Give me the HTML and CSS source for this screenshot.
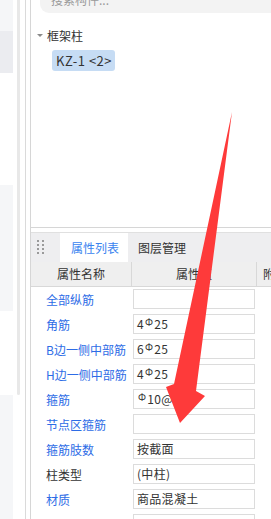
FILE: index.html
```html
<!DOCTYPE html>
<html lang="zh-CN">
<head>
    <meta charset="UTF-8">
    <title>属性列表</title>
    <link rel="stylesheet" href="styles.css">
</head>
<body>
    <div class="app">
        <div class="nav">
            <div class="nav-block soft h31"></div>
            <div class="nav-block dark h42"></div>
            <div class="nav-block h112"></div>
            <div class="nav-block soft h126"></div>
            <div class="nav-block h84"></div>
            <div class="nav-block soft grow"></div>
        </div>
        <div class="rail">
            <div class="thumb"></div>
        </div>
        <div class="main">
            <section class="tree-panel">
                <div class="search">搜索构件...</div>
                <div class="tree-group">
                    <span class="caret"></span>
                    <span>框架柱</span>
                </div>
                <div class="tree-item">KZ-1 &lt;2&gt;</div>
            </section>

            <section class="prop-panel">
                <div class="tabs">
                    <div class="grip">
                        <i></i><i></i><i></i><i></i><i></i><i></i><i></i><i></i>
                    </div>
                    <div class="tab active">属性列表</div>
                    <div class="tab">图层管理</div>
                </div>
                <div class="thead">
                    <div class="th name">属性名称</div>
                    <div class="th value">属性值</div>
                    <div class="th extra">附加</div>
                </div>
                <div class="row">
                    <div class="label">全部纵筋</div>
                    <div class="input"></div>
                </div>
                <div class="row">
                    <div class="label">角筋</div>
                    <div class="input">4<span class="steel">Φ</span>25</div>
                </div>
                <div class="row">
                    <div class="label">B边一侧中部筋</div>
                    <div class="input">6<span class="steel">Φ</span>25</div>
                </div>
                <div class="row">
                    <div class="label">H边一侧中部筋</div>
                    <div class="input">4<span class="steel">Φ</span>25</div>
                </div>
                <div class="row">
                    <div class="label">箍筋</div>
                    <div class="input"><span class="steel">Φ</span>10@100</div>
                </div>
                <div class="row">
                    <div class="label">节点区箍筋</div>
                    <div class="input"></div>
                </div>
                <div class="row">
                    <div class="label">箍筋肢数</div>
                    <div class="input">按截面</div>
                </div>
                <div class="row">
                    <div class="label plain">柱类型</div>
                    <div class="input">(中柱)</div>
                </div>
                <div class="row">
                    <div class="label">材质</div>
                    <div class="input">商品混凝土</div>
                </div>
                <div class="row">
                    <div class="label"></div>
                    <div class="input"></div>
                </div>
            </section>
        </div>
    </div>

    <svg class="arrow" width="271" height="519" viewBox="0 0 271 519">
        <polygon points="232,112 196,391 205,396 180,423 166,387 174,384" fill="#fe3a3a"/>
    </svg>
</body>
</html>
```

FILE: styles.css
```css
body {
    margin: 0;
    width: 271px;
    height: 519px;
    overflow: hidden;
    position: relative;
    background: #fff;
    font-family: "Noto Sans CJK SC", "Noto Sans", sans-serif;
    font-size: 12px;
    color: #333;
}
.app {
    display: flex;
    height: 519px;
}

/* left navigation strip */
.nav {
    width: 13px;
    display: flex;
    flex-direction: column;
    flex-shrink: 0;
}
.nav-block { background: #fff; }
.nav-block.soft { background: #f5f6f8; }
.nav-block.dark { background: #ebecf0; }
.h31 { height: 31px; }
.h42 { height: 42px; }
.h112 { height: 112px; }
.h126 { height: 126px; }
.h84 { height: 84px; }
.grow { flex: 1; }

.rail {
    width: 13px;
    flex-shrink: 0;
    border-right: 1px solid #dadada;
    box-sizing: border-box;
}
.thumb {
    margin-left: 4px;
    width: 3px;
    height: 395px;
    background: #e8e8e8;
    border-radius: 0 0 2px 2px;
}

.main {
    margin-left: 4px;
    width: 260px;
    flex-shrink: 0;
    border-left: 1px solid #d6d6d6;
    display: flex;
    flex-direction: column;
}

/* component tree */
.tree-panel {
    height: 227px;
    border-bottom: 1px solid #d6d6d6;
    flex-shrink: 0;
}
.search {
    margin: -11px 0 0 9px;
    height: 24px;
    line-height: 22px;
    padding-left: 11px;
    background: #f3f3f3;
    border-radius: 9px;
    color: #9a9a9a;
    font-size: 12px;
}
.tree-group {
    display: flex;
    align-items: center;
    height: 16px;
    margin-top: 14px;
    padding-left: 6px;
    font-size: 12px;
    color: #333;
}
.caret {
    width: 0;
    height: 0;
    border-left: 3px solid transparent;
    border-right: 3px solid transparent;
    border-top: 3px solid #8a8a8a;
    margin-right: 4px;
}
.tree-item {
    margin: 7px 0 0 21px;
    width: 63px;
    height: 21px;
    line-height: 21px;
    padding-left: 4px;
    box-sizing: border-box;
    background: #c6dcf4;
    border-radius: 3px;
    font-size: 13px;
    letter-spacing: 0.5px;
    color: #333;
    white-space: nowrap;
}

/* property panel */
.prop-panel {
    margin-top: 4px;
    border-top: 1px solid #e0e0e0;
    flex: 1;
}
.tabs {
    display: flex;
    height: 29px;
    background: #eeeef0;
    align-items: stretch;
}
.grip {
    width: 7px;
    margin: 7px 16px 0 6px;
    display: grid;
    grid-template-columns: 2px 2px;
    grid-auto-rows: 2px;
    column-gap: 3px;
    row-gap: 2px;
}
.grip i {
    display: block;
    background: #9a9a9a;
}
.tab {
    padding: 0 10px;
    line-height: 29px;
    font-size: 12px;
    color: #333;
}
.tab.active {
    width: 68px;
    padding: 0 0 0 11px;
    box-sizing: border-box;
    background: #fff;
    color: #3a84f0;
}

.thead {
    display: flex;
    height: 24px;
    background: #efefef;
    border-bottom: 1px solid #d8d8d8;
}
.th {
    line-height: 24px;
    font-size: 12px;
    color: #333;
    box-sizing: border-box;
}
.th.name {
    width: 101px;
    text-align: center;
    border-right: 1px solid #d8d8d8;
}
.th.value {
    width: 125px;
    text-align: center;
    border-right: 1px solid #d8d8d8;
}
.th.extra {
    padding-left: 6px;
}

.row {
    display: flex;
    height: 25px;
}
.label {
    width: 102px;
    padding-left: 15px;
    box-sizing: border-box;
    line-height: 26px;
    color: #2d6ce6;
    white-space: nowrap;
    font-size: 12px;
}
.label.plain { color: #333; }
.input {
    margin-top: 2px;
    width: 122px;
    height: 20px;
    box-sizing: border-box;
    border: 1px solid #dcdcdc;
    padding-left: 3px;
    line-height: 18px;
    font-size: 12px;
    letter-spacing: 0.3px;
    color: #333;
    white-space: nowrap;
    overflow: hidden;
}
.steel {
    font-size: 10px;
    position: relative;
    top: -3px;
    margin: 0 1px;
}

.arrow {
    position: absolute;
    left: 0;
    top: 0;
}
```
